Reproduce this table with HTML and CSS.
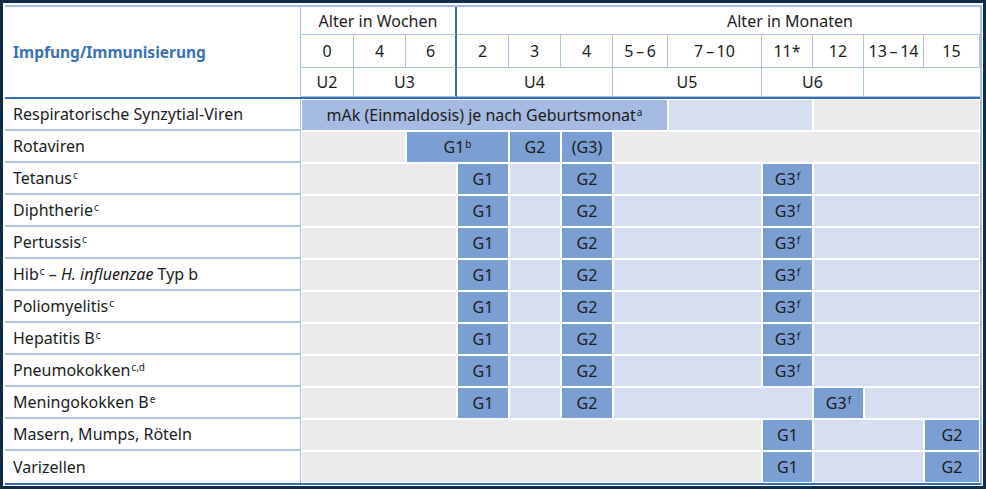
FILE: index.html
```html
<!DOCTYPE html>
<html lang="de">
<head>
<meta charset="utf-8">
<title>Impfkalender</title>
<link rel="stylesheet" href="styles.css">
</head>
<body>
<div class="frame">
  <div class="tbl">
    <div class="head">
      <div class="hc title">Impfung/Immunisierung</div>
      <div class="hc s3 wk">Alter in Wochen</div>
      <div class="hc s9 mo"><span class="mo-text">Alter in Monaten</span></div>

      <div class="hc">0</div>
      <div class="hc">4</div>
      <div class="hc wk">6</div>
      <div class="hc">2</div>
      <div class="hc">3</div>
      <div class="hc">4</div>
      <div class="hc">5&#8201;–&#8201;6</div>
      <div class="hc">7&#8201;–&#8201;10</div>
      <div class="hc">11*</div>
      <div class="hc">12</div>
      <div class="hc">13&#8201;–&#8201;14</div>
      <div class="hc">15</div>

      <div class="hc">U2</div>
      <div class="hc s2 wk">U3</div>
      <div class="hc s3">U4</div>
      <div class="hc s2">U5</div>
      <div class="hc s2">U6</div>
      <div class="hc s2"></div>
    </div>

    <div class="body">
      <div class="row">
        <div class="lab"><span>Respiratorische Synzytial-Viren</span></div>
        <div class="c m s7"><span>mAk (Einmaldosis) je nach Geburtsmonat<sup>a</sup></span></div>
        <div class="c l s2"></div>
        <div class="c g s3"></div>
      </div>
      <div class="row">
        <div class="lab"><span>Rotaviren</span></div>
        <div class="c g s2"></div>
        <div class="c d s2"><span>G1<sup>b</sup></span></div>
        <div class="c d"><span>G2</span></div>
        <div class="c d"><span>(G3)</span></div>
        <div class="c g s6"></div>
      </div>
      <div class="row">
        <div class="lab"><span>Tetanus<sup>c</sup></span></div>
        <div class="c g s3"></div>
        <div class="c d"><span>G1</span></div>
        <div class="c l"></div>
        <div class="c d"><span>G2</span></div>
        <div class="c l s2"></div>
        <div class="c d"><span>G3<sup>f</sup></span></div>
        <div class="c l s3"></div>
      </div>
      <div class="row">
        <div class="lab"><span>Diphtherie<sup>c</sup></span></div>
        <div class="c g s3"></div>
        <div class="c d"><span>G1</span></div>
        <div class="c l"></div>
        <div class="c d"><span>G2</span></div>
        <div class="c l s2"></div>
        <div class="c d"><span>G3<sup>f</sup></span></div>
        <div class="c l s3"></div>
      </div>
      <div class="row">
        <div class="lab"><span>Pertussis<sup>c</sup></span></div>
        <div class="c g s3"></div>
        <div class="c d"><span>G1</span></div>
        <div class="c l"></div>
        <div class="c d"><span>G2</span></div>
        <div class="c l s2"></div>
        <div class="c d"><span>G3<sup>f</sup></span></div>
        <div class="c l s3"></div>
      </div>
      <div class="row">
        <div class="lab"><span>Hib<sup>c</sup> – <i>H. influenzae</i> Typ b</span></div>
        <div class="c g s3"></div>
        <div class="c d"><span>G1</span></div>
        <div class="c l"></div>
        <div class="c d"><span>G2</span></div>
        <div class="c l s2"></div>
        <div class="c d"><span>G3<sup>f</sup></span></div>
        <div class="c l s3"></div>
      </div>
      <div class="row">
        <div class="lab"><span>Poliomyelitis<sup>c</sup></span></div>
        <div class="c g s3"></div>
        <div class="c d"><span>G1</span></div>
        <div class="c l"></div>
        <div class="c d"><span>G2</span></div>
        <div class="c l s2"></div>
        <div class="c d"><span>G3<sup>f</sup></span></div>
        <div class="c l s3"></div>
      </div>
      <div class="row">
        <div class="lab"><span>Hepatitis B<sup>c</sup></span></div>
        <div class="c g s3"></div>
        <div class="c d"><span>G1</span></div>
        <div class="c l"></div>
        <div class="c d"><span>G2</span></div>
        <div class="c l s2"></div>
        <div class="c d"><span>G3<sup>f</sup></span></div>
        <div class="c l s3"></div>
      </div>
      <div class="row">
        <div class="lab"><span>Pneumokokken<sup>c,d</sup></span></div>
        <div class="c g s3"></div>
        <div class="c d"><span>G1</span></div>
        <div class="c l"></div>
        <div class="c d"><span>G2</span></div>
        <div class="c l s2"></div>
        <div class="c d"><span>G3<sup>f</sup></span></div>
        <div class="c l s3"></div>
      </div>
      <div class="row">
        <div class="lab"><span>Meningokokken B<sup>e</sup></span></div>
        <div class="c g s3"></div>
        <div class="c d"><span>G1</span></div>
        <div class="c l"></div>
        <div class="c d"><span>G2</span></div>
        <div class="c l s3"></div>
        <div class="c d"><span>G3<sup>f</sup></span></div>
        <div class="c l s2"></div>
      </div>
      <div class="row">
        <div class="lab"><span>Masern, Mumps, Röteln</span></div>
        <div class="c g s8"></div>
        <div class="c d"><span>G1</span></div>
        <div class="c l s2"></div>
        <div class="c d"><span>G2</span></div>
      </div>
      <div class="row">
        <div class="lab"><span>Varizellen</span></div>
        <div class="c g s8"></div>
        <div class="c d"><span>G1</span></div>
        <div class="c l s2"></div>
        <div class="c d"><span>G2</span></div>
      </div>
    </div>
  </div>
</div>
</body>
</html>
```

FILE: styles.css
```css
* { box-sizing: border-box; }

html, body {
  margin: 0;
  padding: 0;
  background: #ffffff;
}

body {
  font-family: "Noto Sans", "DejaVu Sans", sans-serif;
  font-size: 16px;
  color: #1c1c1c;
}

.frame {
  width: 986px;
  height: 489px;
  border: 3px solid #102c4b;
  padding: 2px 0 0 2px;
  background: #ffffff;
}

.tbl {
  width: 977px;
  border-top: 2px solid #a6c0e4;
  border-right: 2px solid #a6c0e4;
  border-bottom: 2px solid #3a6cb0;
}

.head,
.row {
  display: grid;
  grid-template-columns: 296px 53px 52px 51px 52px 52px 52px 55px 94px 51px 51px 60px 56px;
}

.head {
  grid-template-rows: 28px 33px 29px;
  border-bottom: 2px solid #3a6cb0;
}

.hc {
  display: flex;
  align-items: center;
  justify-content: center;
  border-right: 1px solid #a9c3e6;
  border-bottom: 1px solid #a9c3e6;
  line-height: 1;
  white-space: nowrap;
}

.head .hc:last-child,
.head .hc:nth-child(3) {
  border-right: none;
}

.hc.wk {
  border-right: 2px solid #3a6cb0;
}

.title {
  grid-row: 1 / 4;
  justify-content: flex-start;
  padding-left: 8px;
  padding-top: 2px;
  border-bottom: none;
  color: #3a72b9;
  font-weight: 700;
  font-size: 15.5px;
}

.mo {
  justify-content: flex-start;
}

.mo-text {
  padding-left: 270px;
}

.s2 { grid-column: span 2; }
.s3 { grid-column: span 3; }
.s6 { grid-column: span 6; }
.s7 { grid-column: span 7; }
.s8 { grid-column: span 8; }
.s9 { grid-column: span 9; }

.row {
  height: 32px;
}

.lab {
  display: flex;
  align-items: center;
  padding-left: 8px;
  padding-bottom: 1px;
  border-right: 1px solid #a9c3e6;
  border-bottom: 2px solid #adc5e6;
  white-space: nowrap;
}

.row:last-child .lab {
  border-bottom: none;
}

.c {
  display: flex;
  align-items: center;
  justify-content: center;
  border: 1px solid #ffffff;
  white-space: nowrap;
  padding-bottom: 1px;
}

.g { background: #ebebeb; }
.l { background: #d6dff1; }
.d { background: #7b9ed3; }
.m { background: #a6bbe2; }

sup {
  font-size: 10px;
  line-height: 0;
  vertical-align: 5px;
  margin-left: 1px;
}
```
